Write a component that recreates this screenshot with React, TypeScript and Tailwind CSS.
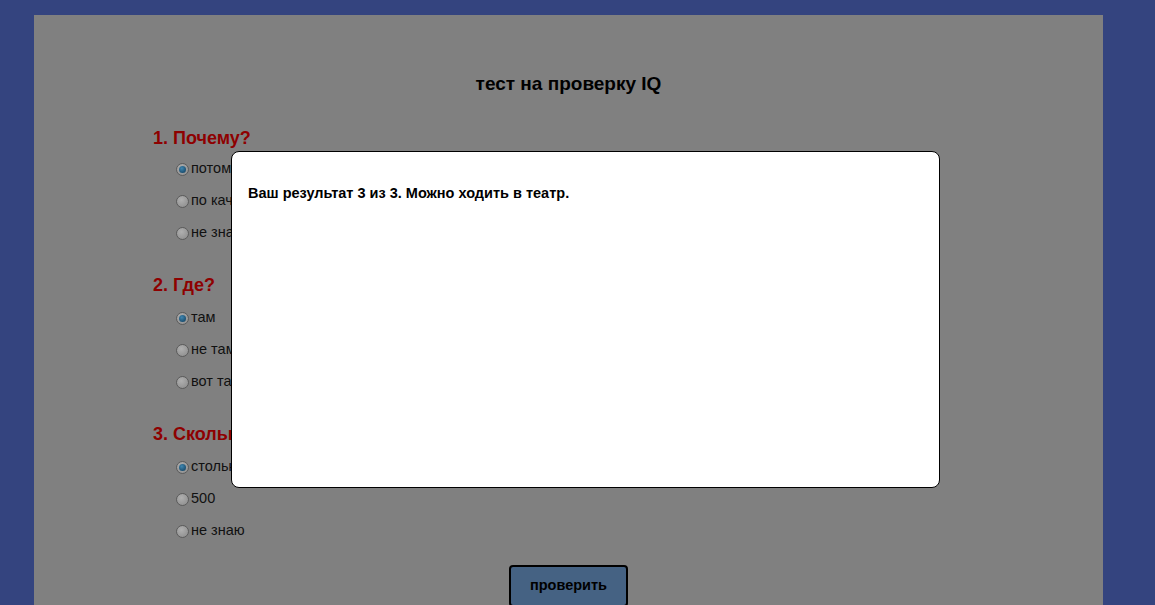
import React from "react";

interface Question {
  title: string;
  options: string[];
  checked: number;
}

const questions: Question[] = [
  { title: "1. Почему?", options: ["потому", "по качеству", "не знаю"], checked: 0 },
  { title: "2. Где?", options: ["там", "не там", "вот там"], checked: 0 },
  { title: "3. Сколько?", options: ["столько", "500", "не знаю"], checked: 0 },
];

const Radio = ({ on }: { on: boolean }) => (
  <span className="w-[13px] h-[13px] rounded-full border border-[#5b5b5b] bg-[radial-gradient(circle_at_40%_35%,#b0b0b0,#8a8a8a)] flex items-center justify-center mr-[2px]">
    {on && <span className="w-[7px] h-[7px] rounded-full bg-[radial-gradient(circle_at_40%_35%,#3f86b0,#0f3a58)]" />}
  </span>
);

const App = () => {
  return (
    <div className="min-h-screen bg-[#34447f] px-[34px] pt-[15px] font-['Liberation_Sans',Arial,sans-serif] overflow-hidden h-[605px]">
      <div className="relative bg-[#808080] w-[1069px] h-[700px]">
        <h1 className="pt-[57px] h-[81px] leading-[24px] text-[19px] font-bold text-center text-black">
          тест на проверку IQ
        </h1>

        <div className="pl-[119px]">
          {questions.map((q, qi) => (
            <div key={qi} className={qi === 0 ? "mt-[30px]" : "mt-[24px]"}>
              <h2 className="h-[24px] leading-[24px] text-[18px] font-bold text-[#8e0000]">{q.title}</h2>
              <ul className={qi === 0 ? "mt-[3px] pl-[23px]" : "mt-[5px] pl-[23px]"}>
                {q.options.map((o, oi) => (
                  <li key={oi} className="h-[32px] flex items-center text-[14.5px] text-[#111]">
                    <Radio on={oi === q.checked} />
                    <span>{o}</span>
                  </li>
                ))}
              </ul>
            </div>
          ))}
        </div>

        <div className="flex justify-center mt-[18px]">
          <button className="w-[119px] h-[42px] bg-[#456283] border-2 border-black rounded-[4px] text-[14.5px] font-bold text-black">
            проверить
          </button>
        </div>

        {/* result popup */}
        <div className="absolute left-[197px] top-[136px] w-[709px] h-[337px] bg-white border border-black rounded-[8px] px-[16px] pt-[32px]">
          <p className="text-[14.5px] font-bold text-black leading-[18px]">
            Ваш результат 3 из 3. Можно ходить в театр.
          </p>
        </div>
      </div>
    </div>
  );
};

export default App;
